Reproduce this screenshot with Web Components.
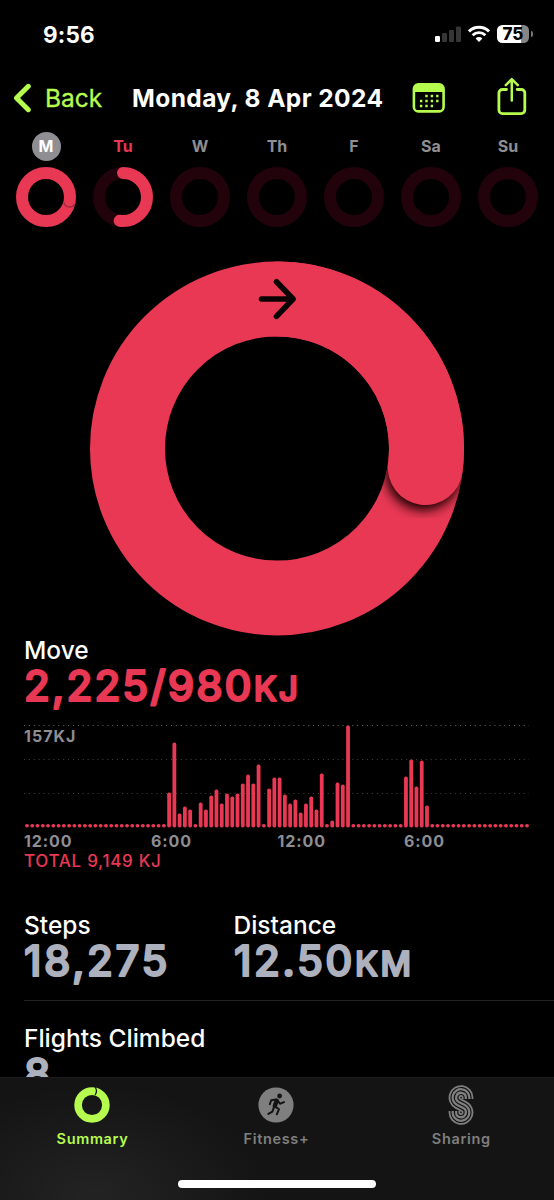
<!DOCTYPE html>
<html lang="en">
<head>
<meta charset="utf-8">
<title>Activity</title>
<style>
  html, body {
    margin: 0;
    background: #000;
  }

  body {
    width: 554px;
    height: 1200px;
    overflow: hidden;
    font-family: Inter, "Liberation Sans", sans-serif;
    color: #fff;
    --move: #e83854;
    --move-dim: #22030b;
    --accent: #b5fc4f;
    --grey: #8e8e93;
    --value: #adb0bd;
  }
</style>
</head>
<body>
<activity-app></activity-app>

<script>
const define = (name, html, setup) => {
  const template = document.createElement('template');
  template.innerHTML = html;

  customElements.define(name, class extends HTMLElement {
    constructor() {
      super();
      this.attachShadow({ mode: 'open' }).append(template.content.cloneNode(true));
    }

    connectedCallback() {
      if (setup) setup(this, this.shadowRoot);
    }
  });
};

define('status-bar', `
  <style>
    :host {
      display: flex;
      align-items: center;
      justify-content: space-between;
      height: 68px;
      padding: 0 21px 0 43px;
    }
    .time { font-size: 22.5px; font-weight: 700; letter-spacing: .2px; }
    .icons { display: flex; align-items: center; gap: 7px; }
    svg { display: block; }
    .battery { display: flex; align-items: center; gap: 2px; }
    .body {
      width: 32px;
      height: 18px;
      border-radius: 5.5px;
      background: linear-gradient(90deg, #fff 76%, #858585 76%);
      color: #000;
      font-size: 17px;
      font-weight: 800;
      line-height: 18px;
      text-align: center;
    }
    .nub { width: 2px; height: 6px; border-radius: 0 3px 3px 0; background: #777; }
  </style>
  <span class="time">9:56</span>
  <div class="icons">
    <svg width="26" height="18" viewBox="0 0 26 18">
      <rect x="0" y="11" width="5" height="6" rx="1.3" fill="#fff"/>
      <rect x="7" y="8" width="5" height="9" rx="1.3" fill="#363636"/>
      <rect x="14" y="5" width="5" height="12" rx="1.3" fill="#363636"/>
      <rect x="21" y="1.5" width="5" height="15.5" rx="1.3" fill="#363636"/>
    </svg>
    <svg width="22" height="18" viewBox="0 0 22 18" fill="none" stroke="#fff" stroke-width="2.9">
      <path d="M1 6.4a14.3 14.3 0 0 1 20 0"/>
      <path d="M4.6 10.2a9.2 9.2 0 0 1 12.8 0"/>
      <path d="M11 16.9L7.6 13.4a4.8 4.8 0 0 1 6.8 0z" fill="#fff" stroke="none"/>
    </svg>
    <div class="battery"><div class="body">75</div><div class="nub"></div></div>
  </div>
`);

define('nav-bar', `
  <style>
    :host {
      display: grid;
      grid-template-columns: 119px 280px 84px auto;
      align-items: center;
      height: 60px;
      padding-left: 13px;
      color: var(--accent);
    }
    .back { display: flex; align-items: center; gap: 14px; font-size: 24.5px; font-weight: 400; }
    .back span { -webkit-text-stroke: .3px currentColor; }
    h1 {
      margin: 0;
      color: #fff;
      font-size: 24.5px;
      font-weight: 700;
      letter-spacing: .4px;
      white-space: nowrap;
    }
    svg { display: block; }
    .raised { margin-top: -2px; }
  </style>
  <div class="back">
    <svg width="18" height="30" viewBox="0 0 18 30" fill="none" stroke="currentColor" stroke-width="5" stroke-linecap="round" stroke-linejoin="round">
      <path d="M15.3 3.3L3.5 15l11.8 11.7"/>
    </svg>
    <span>Back</span>
  </div>
  <h1><slot></slot></h1>
  <svg width="34" height="32" viewBox="0 0 34 32">
    <rect x="1.9" y="2.4" width="29.7" height="27" rx="4.5" fill="none" stroke="currentColor" stroke-width="2.6"/>
    <path d="M2 10V6.5a4 4 0 0 1 4-4h21.5a4 4 0 0 1 4 4V10z" fill="currentColor"/>
    <g stroke="currentColor" stroke-width="2.4" stroke-dasharray="2.4 3">
      <path d="M13.3 14h13.3M7.9 19h18.7M7.9 24h13.3"/>
    </g>
  </svg>
  <svg class="raised" width="32" height="40" viewBox="0 0 32 40" fill="none" stroke="currentColor" stroke-width="2.8" stroke-linecap="round" stroke-linejoin="round">
    <path d="M10.5 12.5H6.5a3.6 3.6 0 0 0-3.6 3.6V33a3.6 3.6 0 0 0 3.6 3.6h18.7a3.6 3.6 0 0 0 3.6-3.6V16.1a3.6 3.6 0 0 0-3.6-3.6h-4"/>
    <path d="M15.8 23.5V2.5M9.8 8.2l6-6 6 6" stroke-width="2.5"/>
  </svg>
`);

define('day-ring', `
  <style>
    :host { display: flex; flex-direction: column; align-items: center; gap: 6px; color: var(--grey); }
    .label {
      width: 29px;
      height: 29px;
      border-radius: 50%;
      font-size: 16px;
      font-weight: 700;
      line-height: 29px;
      text-align: center;
    }
    :host([selected]) .label { background: var(--grey); color: #fff; }
    :host([today]) .label { color: var(--move); }
    svg { display: block; }
    circle { fill: none; stroke: var(--move-dim); stroke-width: 12; }
    .arc { stroke: var(--move); stroke-linecap: round; }
    .tip { fill: none; stroke: #a02539; stroke-width: 1.3; }
  </style>
  <div class="label"><slot></slot></div>
  <svg width="60" height="60" viewBox="0 0 60 60"><circle cx="30" cy="30" r="24"/></svg>
`, (host, root) => {
  const progress = Number(host.getAttribute('progress'));
  if (!progress) return;
  const svg = root.querySelector('svg');
  const length = Math.min(progress, 1) * 2 * Math.PI * 24;
  svg.innerHTML += `<circle class="arc" cx="30" cy="30" r="24" stroke-dasharray="${length} 200" transform="rotate(-90 30 30)"/>`;
  if (progress > 1) svg.innerHTML += '<path class="tip" d="M47.8 35.3a6 6 0 0 0 11 1.8"/>';
});

define('week-strip', `
  <style>
    :host {
      display: grid;
      grid-template-columns: repeat(7, 77px);
      height: 98.5px;
      padding: 3.5px 0 0 7.5px;
    }
  </style>
  <day-ring selected progress="2.27">M</day-ring>
  <day-ring today progress="0.52">Tu</day-ring>
  <day-ring>W</day-ring>
  <day-ring>Th</day-ring>
  <day-ring>F</day-ring>
  <day-ring>Sa</day-ring>
  <day-ring>Su</day-ring>
`);

// second lap of the ring lies over the first one, with a shadow under its tip
define('move-ring', `
  <style>
    :host { display: flex; justify-content: center; padding-top: 31px; }
    svg { display: block; }
    .lap { fill: none; stroke: var(--move); stroke-width: 75; }
  </style>
  <svg width="374" height="375" viewBox="0.5 0 374 375">
    <defs>
      <filter id="blur" x="-50%" y="-50%" width="200%" height="200%"><feGaussianBlur stdDeviation="5.5"/></filter>
      <mask id="band"><circle cx="187.5" cy="187.5" r="149.5" fill="none" stroke="#fff" stroke-width="75"/></mask>
    </defs>
    <circle class="lap" cx="187.5" cy="187.5" r="149.5"/>
    <g mask="url(#band)">
      <circle cx="334" cy="211.5" r="38" fill="#1c0006" filter="url(#blur)"/>
    </g>
    <path class="lap" stroke-linecap="round" d="M187.5 38A149.5 149.5 0 0 1 335.8 206.5"/>
    <path d="M172 38h31.5M187 20.8L203.6 38 187 55.4" fill="none" stroke="#0b0204" stroke-width="5.6" stroke-linecap="round" stroke-linejoin="round"/>
  </svg>
`);

// rounded numerals: the text gets a thin stroke with round joins
define('metric-value', `
  <style>
    :host { display: block; height: 48px; color: var(--value); }
    svg { display: block; overflow: visible; }
    text {
      font-size: 42px;
      font-weight: 500;
      fill: currentColor;
      stroke: currentColor;
      stroke-width: 2;
      stroke-linejoin: round;
    }
    .unit { font-size: 33.5px; }
  </style>
  <svg width="290" height="48"><text x="0" y="39"></text></svg>
`, (host, root) => {
  const unit = host.getAttribute('unit') || '';
  const text = root.querySelector('text');
  text.innerHTML = `${host.getAttribute('value')}<tspan class="unit">${unit}</tspan>`;
  if (host.hasAttribute('fit')) text.setAttribute('textLength', host.getAttribute('fit'));
});

define('metric-block', `
  <style>
    :host { display: block; }
    .label {
      height: 24px;
      font-size: 24.5px;
      font-weight: 500;
      line-height: 24px;
      white-space: nowrap;
    }
  </style>
  <div class="label"><slot name="label"></slot></div>
  <slot></slot>
`);

define('move-chart', `
  <style>
    :host { display: block; }
    .plot { display: grid; height: 103px; }
    .plot > * { grid-area: 1 / 1; }
    svg { display: block; overflow: visible; }
    .grid { stroke: #6b6b6e; stroke-width: 1; stroke-dasharray: 1 3.9; }
    .grid .soft { stroke: #434346; }
    .bars { fill: var(--move); }
    .peak { align-self: start; padding-top: 2px; }
    .peak, .axis { color: var(--grey); font-size: 16px; font-weight: 700; line-height: 18px; }
    .peak { letter-spacing: 1px; }
    .axis {
      display: grid;
      grid-template-columns: 127px 126.5px 126.5px auto;
      padding-top: 4px;
      letter-spacing: .9px;
    }
    .total { height: 20px; color: var(--move); font-size: 17px; font-weight: 500; line-height: 21px; padding-top: 1px; letter-spacing: .7px; }
  </style>
  <div class="plot">
    <div class="peak">157KJ</div>
    <svg width="506" height="103">
      <g class="grid">
        <path d="M0 .5h505"/>
        <path class="soft" d="M0 34.5h505M0 68.5h505"/>
      </g>
      <g class="bars"></g>
    </svg>
  </div>
  <div class="axis"><span>12:00</span><span>6:00</span><span>12:00</span><span>6:00</span></div>
  <div class="total">TOTAL 9,149 KJ</div>
`, (host, root) => {
  // one bar per quarter of an hour, idle ones are drawn as dots
  const heights = new Array(96).fill(3.6);
  const fill = (start, values) => values.forEach((v, i) => { heights[start + i] = v || 3.6; });
  fill(27, [35, 85, 14, 21, 18, 0, 25, 18, 32, 38, 24, 34, 31, 34, 44, 53, 44, 63, 0,
    39, 50, 50, 33, 24, 28, 15, 24, 31, 18, 54, 0, 7, 45, 43, 102]);
  fill(72, [51, 68, 41, 67, 22]);

  root.querySelector('.bars').innerHTML = heights.map((h, i) => {
    const x = 3 + i * 5.263 - 1.9;
    return `<rect x="${x.toFixed(2)}" y="${(102.5 - h).toFixed(1)}" width="3.8" height="${h}" rx="1.7"/>`;
  }).join('');
});

define('tab-item', `
  <style>
    :host { display: flex; flex-direction: column; align-items: center; color: #7f7f7f; }
    :host([active]) { color: var(--accent); }
    .icon { display: flex; align-items: center; justify-content: center; height: 40px; }
    .label { margin-top: 5px; padding-left: 1px; font-size: 14.5px; font-weight: 600; line-height: 18px; letter-spacing: .65px; }
  </style>
  <div class="icon"><slot name="icon"></slot></div>
  <div class="label"><slot></slot></div>
`);

define('tab-bar', `
  <style>
    :host {
      display: flex;
      flex-direction: column;
      justify-content: space-between;
      height: 123px;
      background: radial-gradient(ellipse 170px 110px at 95px 118px, #232323, #141414 100%);
      box-shadow: inset 0 1px #1d1d1d;
    }
    .tabs { display: grid; grid-template-columns: 184px 184px 185.5px; padding-top: 8px; }
    .home { align-self: center; width: 198px; height: 8px; margin-bottom: 12px; border-radius: 4px; background: #fff; }
    svg { display: block; }
  </style>
  <div class="tabs">
    <tab-item active>
      <svg slot="icon" width="38" height="38" viewBox="-19 -19 38 38" fill="none">
        <circle r="13.9" stroke="currentColor" stroke-width="7.6"/>
        <path d="M3.3-17.5q2.4 3.5 0 7" stroke="#141414" stroke-width="1.3" stroke-linecap="round"/>
      </svg>
      Summary
    </tab-item>
    <tab-item>
      <svg slot="icon" width="38" height="38" viewBox="-19 -19 38 38" fill="none" stroke="#141414" stroke-linecap="round" stroke-linejoin="round">
        <circle r="17.6" fill="currentColor" stroke="none"/>
        <circle cx="3.6" cy="-9" r="2.4" fill="#141414" stroke="none"/>
        <path d="M.7-4.2L-1.2 1" stroke-width="4.4"/>
        <path d="M1-5.2L4-1.3 8-2.9M0-5.6l-4.8.8-1.4 4.1M-1 1.4L3 4.2.8 9.3M-2 2l-1.6 4.6-4 2.3" stroke-width="2"/>
      </svg>
      Fitness+
    </tab-item>
    <tab-item>
      <svg slot="icon" width="30" height="40" viewBox="-15 -20 30 40" fill="none">
        <defs>
          <path id="s" d="M6.6-6V-7.4A6.6 6.6 0 1 0-3-1.52L3 1.52A6.6 6.6 0 1 1-6.6 7.4V6"/>
        </defs>
        <use href="#s" stroke="currentColor" stroke-width="11.6"/>
        <use href="#s" stroke="#141414" stroke-width="8.1"/>
        <use href="#s" stroke="currentColor" stroke-width="5.8"/>
        <use href="#s" stroke="#141414" stroke-width="1.3"/>
      </svg>
      Sharing
    </tab-item>
  </div>
  <div class="home"></div>
`);

define('activity-app', `
  <style>
    :host { display: flex; flex-direction: column; width: 554px; height: 1200px; background: #000; }
    main { height: 949px; overflow: hidden; }
    section { padding-left: 24px; }
    .move { padding-top: 2px; }
    .move metric-value { color: var(--move); }
    move-chart { margin-top: 15px; }
    .pair { display: grid; grid-template-columns: 209.5px auto; padding-top: 42px; height: 87px; }
    hr { height: 1px; margin: 0 0 0 24px; border: 0; background: #232325; }
    .climb { padding-top: 25px; }
  </style>
  <status-bar></status-bar>
  <nav-bar>Monday, 8 Apr 2024</nav-bar>
  <main>
    <week-strip></week-strip>
    <move-ring></move-ring>
    <section class="move">
      <metric-block>
        <span slot="label">Move</span>
        <metric-value value="2,225/980" unit="KJ" fit="274"></metric-value>
      </metric-block>
      <move-chart></move-chart>
    </section>
    <section class="pair">
      <metric-block>
        <span slot="label">Steps</span>
        <metric-value value="18,275" fit="143.5"></metric-value>
      </metric-block>
      <metric-block>
        <span slot="label">Distance</span>
        <metric-value value="12.50" unit="KM" fit="177"></metric-value>
      </metric-block>
    </section>
    <hr>
    <section class="climb">
      <metric-block>
        <span slot="label">Flights Climbed</span>
        <metric-value value="8"></metric-value>
      </metric-block>
    </section>
  </main>
  <tab-bar></tab-bar>
`);
</script>
</body>
</html>
